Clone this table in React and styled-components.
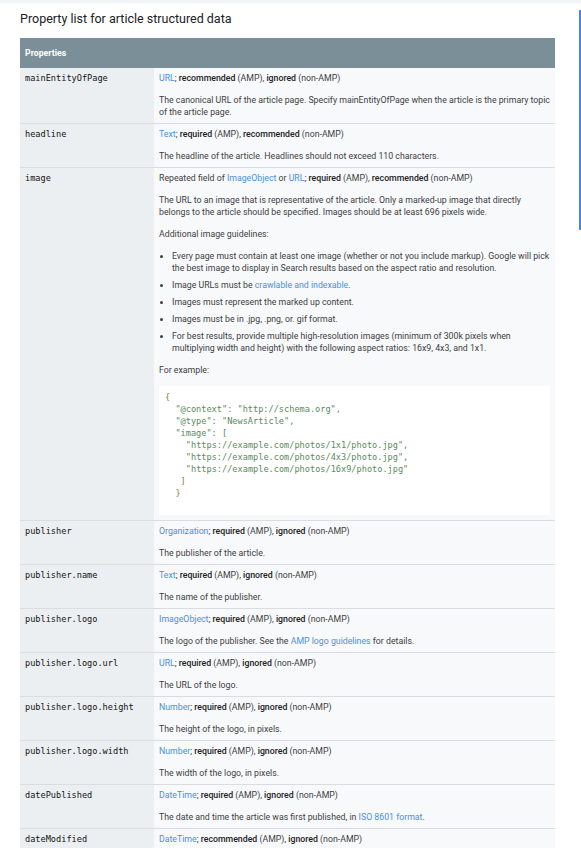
import styled, { createGlobalStyle } from 'styled-components';

const GlobalStyle = createGlobalStyle`
    html, body {
        margin: 0;
        padding: 0;
        background: #ffffff;
    }
    body {
        font-family: Roboto, "Liberation Sans", Arial, sans-serif;
        color: #202124;
    }
`;

const rows = [
    {
        name: 'mainEntityOfPage',
        type: 'URL',
        level: 'recommended (AMP), ignored (non-AMP)',
        desc: ['The canonical URL of the article page. Specify mainEntityOfPage when the article is the primary topic of the article page.'],
    },
    {
        name: 'headline',
        type: 'Text',
        level: 'required (AMP), recommended (non-AMP)',
        desc: ['The headline of the article. Headlines should not exceed 110 characters.'],
    },
    { name: 'image', image: true },
    {
        name: 'publisher',
        type: 'Organization',
        level: 'required (AMP), ignored (non-AMP)',
        desc: ['The publisher of the article.'],
    },
    {
        name: 'publisher.name',
        type: 'Text',
        level: 'required (AMP), ignored (non-AMP)',
        desc: ['The name of the publisher.'],
    },
    {
        name: 'publisher.logo',
        type: 'ImageObject',
        level: 'required (AMP), ignored (non-AMP)',
        desc: ['The logo of the publisher. See the ', { link: 'AMP logo guidelines' }, ' for details.'],
    },
    {
        name: 'publisher.logo.url',
        type: 'URL',
        level: 'required (AMP), ignored (non-AMP)',
        desc: ['The URL of the logo.'],
    },
    {
        name: 'publisher.logo.height',
        type: 'Number',
        level: 'required (AMP), ignored (non-AMP)',
        desc: ['The height of the logo, in pixels.'],
    },
    {
        name: 'publisher.logo.width',
        type: 'Number',
        level: 'required (AMP), ignored (non-AMP)',
        desc: ['The width of the logo, in pixels.'],
    },
    {
        name: 'datePublished',
        type: 'DateTime',
        level: 'required (AMP), ignored (non-AMP)',
        desc: ['The date and time the article was first published, in ', { link: 'ISO 8601 format' }, '.'],
    },
    {
        name: 'dateModified',
        type: 'DateTime',
        level: 'recommended (AMP), ignored (non-AMP)',
        desc: ['The date and time the article was most recently modified, in ', { link: 'ISO 8601 format' }, '.'],
    },
];

const codeLines = [
    [0, '{', 'p'],
    [2, '"@context": "http://schema.org",', 's'],
    [2, '"@type": "NewsArticle",', 's'],
    [2, '"image": [', 's'],
    [4, '"https://example.com/photos/1x1/photo.jpg",', 's'],
    [4, '"https://example.com/photos/4x3/photo.jpg",', 's'],
    [4, '"https://example.com/photos/16x9/photo.jpg"', 's'],
    [3, ']', 'p'],
    [2, '}', 'p'],
];

const Level = ({ text }) => {
    // bold the "required"/"recommended" words like the docs do
    const parts = text.split(/(required|recommended|ignored)/);
    return parts.map((p, i) =>
        /^(required|recommended|ignored)$/.test(p) ? <b key={i}>{p}</b> : <span key={i}>{p}</span>
    );
};

const Rich = ({ parts }) =>
    parts.map((p, i) => (typeof p === 'string' ? <span key={i}>{p}</span> : <Link key={i}>{p.link}</Link>));

const ImageCell = () => (
    <>
        <Para>
            Repeated field of <Link>ImageObject</Link> or <Link>URL</Link>;{' '}
            <Level text="required (AMP), recommended (non-AMP)" />
        </Para>
        <Para>
            The URL to an image that is representative of the article. Only a marked-up image that directly
            belongs to the article should be specified. Images should be at least 696 pixels wide.
        </Para>
        <Para>Additional image guidelines:</Para>
        <List>
            <li>
                Every page must contain at least one image (whether or not you include markup). Google will pick
                the best image to display in Search results based on the aspect ratio and resolution.
            </li>
            <li>
                Image URLs must be <Link>crawlable and indexable</Link>.
            </li>
            <li>Images must represent the marked up content.</li>
            <li>Images must be in .jpg, .png, or. gif format.</li>
            <li>
                For best results, provide multiple high-resolution images (minimum of 300k pixels when
                multiplying width and height) with the following aspect ratios: 16x9, 4x3, and 1x1.
            </li>
        </List>
        <Para>For example:</Para>
        <Code>
            {codeLines.map(([indent, text, kind], i) => (
                <CodeLine key={i} $indent={indent} $kind={kind}>
                    {text}
                </CodeLine>
            ))}
        </Code>
    </>
);

const App = () => {
    return (
        <Page>
            <GlobalStyle />
            <TopStrip />
            <ScrollMark />
            <Title>Property list for article structured data</Title>
            <Table>
                <colgroup>
                    <col style={{ width: 134 }} />
                    <col />
                </colgroup>
                <thead>
                    <tr>
                        <HeadCell colSpan={2}>Properties</HeadCell>
                    </tr>
                </thead>
                <tbody>
                    {rows.map((row) => (
                        <Row key={row.name}>
                            <NameCell>{row.name}</NameCell>
                            <DescCell>
                                {row.image ? (
                                    <ImageCell />
                                ) : (
                                    <>
                                        <Para>
                                            <Link>{row.type}</Link>; <Level text={row.level} />
                                        </Para>
                                        <Para>
                                            <Rich parts={row.desc} />
                                        </Para>
                                    </>
                                )}
                            </DescCell>
                        </Row>
                    ))}
                </tbody>
            </Table>
        </Page>
    );
};

export default App;

const Page = styled.div`
    position: relative;
    width: 581px;
    height: 848px;
    overflow: hidden;
    padding: 0 26px 0 20px;
    box-sizing: border-box;
`;

const TopStrip = styled.div`
    position: absolute;
    top: 0;
    left: 0;
    right: 0;
    height: 3px;
    background: #f1f3f4;
`;

const ScrollMark = styled.div`
    position: absolute;
    top: 10px;
    right: 0;
    width: 2px;
    height: 220px;
    background: #4285f4;
`;

const Title = styled.h2`
    margin: 0;
    padding-top: 11px;
    height: 27px;
    font-size: 12.5px;
    font-weight: 400;
    line-height: 16px;
    color: #202124;
`;

const Table = styled.table`
    width: 535px;
    border-collapse: collapse;
    table-layout: fixed;
    font-size: 8.75px;
    line-height: 12px;
`;

const HeadCell = styled.th`
    height: 30px;
    padding: 0 5px;
    box-sizing: border-box;
    background: #7a8f98;
    color: #ffffff;
    font-weight: 700;
    text-align: left;
    font-size: 8.75px;
`;

const Row = styled.tr`
    border-bottom: 1px solid #dadce0;
`;

const NameCell = styled.td`
    box-sizing: border-box;
    padding: 4px 5px 5px;
    vertical-align: top;
    background: #eceff1;
    font-family: "DejaVu Sans Mono", "Liberation Mono", monospace;
    font-size: 8.6px;
    font-weight: 400;
    color: #111111;
`;

const DescCell = styled.td`
    padding: 4px 5px 5px 5px;
    vertical-align: top;
    background: #f8f9fa;
    color: #3c4043;
`;

const Para = styled.p`
    margin: 0 0 10px;
    &:last-child {
        margin-bottom: 0;
    }
    b {
        font-weight: 500;
        color: #202124;
    }
`;

const Link = styled.a`
    color: #4a90e2;
    text-decoration: none;
`;

const List = styled.ul`
    margin: 0 0 10px;
    padding-left: 13px;
    li {
        margin-bottom: 5px;
    }
    li:last-child {
        margin-bottom: 0;
    }
`;

const Code = styled.pre`
    margin: 0;
    padding: 5px 6px 16px;
    background: #ffffff;
    font-family: "DejaVu Sans Mono", "Liberation Mono", monospace;
    font-size: 8.6px;
    line-height: 12px;
`;

const CodeLine = styled.div`
    padding-left: ${(p) => p.$indent * 5.2}px;
    color: ${(p) => (p.$kind === 's' ? '#5d8a5e' : '#8c7a4a')};
    white-space: pre;
`;
